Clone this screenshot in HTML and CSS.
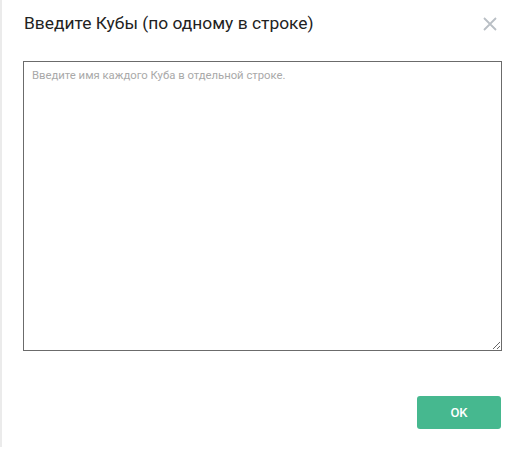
FILE: index.html
```html
<!DOCTYPE html>
<html lang="ru">
<head>
<meta charset="utf-8">
<link rel="stylesheet" href="styles.css">
</head>
<body>
<div class="modal">
  <div class="header">
    <h1 class="title">Введите Кубы (по одному в строке)</h1>
    <button class="close" aria-label="Закрыть">
      <svg width="14" height="14" viewBox="0 0 14 14"><path d="M1 1 L13 13 M13 1 L1 13" stroke="#b9bfc5" stroke-width="1.8" fill="none"/></svg>
    </button>
  </div>
  <div class="body">
    <textarea class="input" placeholder="Введите имя каждого Куба в отдельной строке."></textarea>
  </div>
  <div class="footer">
    <button class="ok">OK</button>
  </div>
</div>
</body>
</html>
```
FILE: styles.css
```css
html, body {
  margin: 0;
  padding: 0;
  background: #fff;
}
body {
  font-family: Roboto, "Liberation Sans", sans-serif;
}
.modal {
  width: 520px;
  height: 447px;
  border-left: 2px solid #ebebeb;
  display: flex;
  flex-direction: column;
  box-sizing: border-box;
}
.header {
  display: flex;
  align-items: center;
  justify-content: space-between;
  padding: 8px 23px 0 22px;
  height: 30px;
}
.title {
  margin: 0;
  font-size: 17.4px;
  font-weight: 400;
  color: #222;
  line-height: 24px;
}
.close {
  border: 0;
  background: none;
  padding: 0;
  width: 14px;
  height: 14px;
  display: flex;
  margin-top: 2px;
}
.body {
  padding: 23px 19px 0 21px;
}
.input {
  display: block;
  width: 479px;
  height: 290px;
  box-sizing: border-box;
  border: 1px solid #6b6b6b;
  border-radius: 0;
  padding: 7px 8px;
  font-family: Roboto, "Liberation Sans", sans-serif;
  font-size: 11.3px;
  color: #333;
  resize: both;
  outline: none;
  margin: 0;
}
.input::placeholder {
  color: #a9a9a9;
}
.footer {
  display: flex;
  justify-content: flex-end;
  padding: 45px 19px 0 0;
}
.ok {
  width: 84px;
  height: 33px;
  background: #46b88f;
  border: 0;
  border-radius: 3px;
  color: #fff;
  font-family: Roboto, "Liberation Sans", sans-serif;
  font-size: 13px;
  font-weight: 500;
  padding: 0;
}
```
